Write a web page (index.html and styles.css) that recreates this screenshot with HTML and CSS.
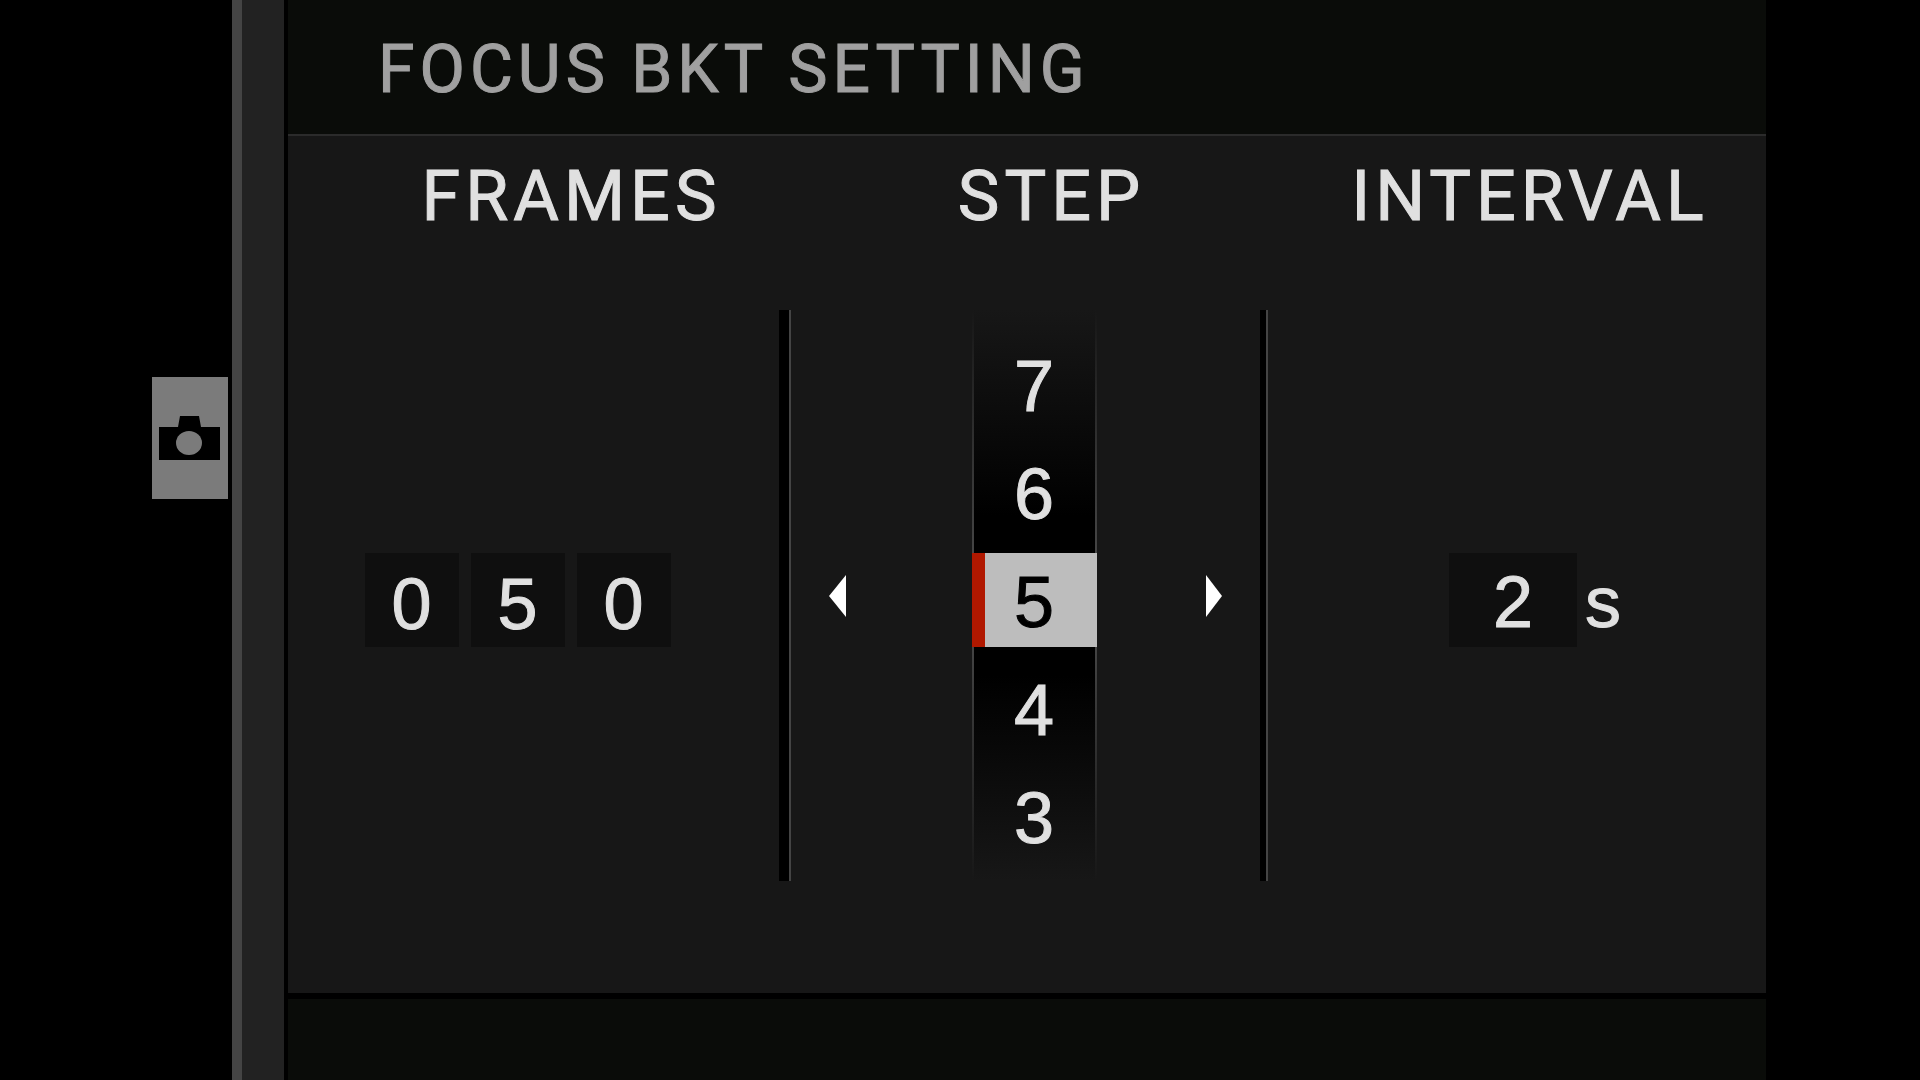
FILE: index.html
```html
<!DOCTYPE html>
<html lang="en">
<head>
  <meta charset="utf-8">
  <meta name="viewport" content="width=device-width, initial-scale=1">
  <title>Focus BKT Setting</title>
  <link rel="stylesheet" href="styles.css">
</head>
<body>
  <div class="screen">
    <nav class="tabs" aria-label="Menu tabs">
      <button class="tab" type="button" aria-label="Shooting setting">
        <svg class="tab-icon" viewBox="0 0 62 46" aria-hidden="true">
          <path d="M0 12H19L21 1H40L42 12H61V45H0Z" fill="#000"/>
          <ellipse cx="30" cy="28" rx="13" ry="12" fill="#7b7b7b"/>
        </svg>
      </button>
    </nav>
    <div class="rail"></div>
    <main class="panel">
      <header class="panel-header">
        <h1 class="title">FOCUS BKT SETTING</h1>
      </header>
      <div class="settings">
        <h2 class="heading heading-frames" id="frames">FRAMES</h2>
        <h2 class="heading heading-step" id="step">STEP</h2>
        <h2 class="heading heading-interval" id="interval">INTERVAL</h2>

        <div class="control control-frames" role="group" aria-labelledby="frames">
          <input class="value" type="text" inputmode="numeric" maxlength="1" value="0" aria-label="Frames, hundreds">
          <input class="value" type="text" inputmode="numeric" maxlength="1" value="5" aria-label="Frames, tens">
          <input class="value" type="text" inputmode="numeric" maxlength="1" value="0" aria-label="Frames, units">
        </div>
        <div class="divider divider-left"></div>
        <div class="control control-step" role="group" aria-labelledby="step">
          <button class="arrow" type="button" aria-label="Previous setting">
            <svg class="arrow-icon" viewBox="0 0 18 42" aria-hidden="true"><path d="M17 0V42L0 21Z" fill="#fff"/></svg>
          </button>
          <div class="reel" role="listbox" aria-labelledby="step">
            <button class="step" type="button" role="option" aria-selected="false">7</button>
            <button class="step" type="button" role="option" aria-selected="false">6</button>
            <button class="step step-selected" type="button" role="option" aria-selected="true">5</button>
            <button class="step" type="button" role="option" aria-selected="false">4</button>
            <button class="step" type="button" role="option" aria-selected="false">3</button>
          </div>
          <button class="arrow" type="button" aria-label="Next setting">
            <svg class="arrow-icon" viewBox="0 0 18 42" aria-hidden="true"><path d="M1 0V42L17 21Z" fill="#fff"/></svg>
          </button>
        </div>
        <div class="divider divider-right"></div>
        <div class="control control-interval">
          <input class="value value-wide" id="seconds" type="text" inputmode="numeric" value="2" aria-labelledby="interval">
          <label class="unit" for="seconds">s</label>
        </div>
      </div>
      <footer class="panel-footer"></footer>
    </main>
  </div>
</body>
</html>
```
FILE: styles.css
```css
* {
  box-sizing: border-box;
}

body {
  margin: 0;
  background: #000;
  color: #e0e0e0;
  font-family: "Liberation Sans", Arial, sans-serif;
  -webkit-text-stroke: 1px currentColor;
}

button,
input {
  margin: 0;
  padding: 0;
  border: 0;
  background: none;
  color: inherit;
  font: inherit;
}

.screen {
  display: grid;
  grid-template-columns: 232fr 56px 1478fr 154fr;
  min-height: 100vh;
}

/* Menu tabs */
.tabs {
  display: flex;
  justify-content: flex-end;
  align-items: flex-start;
  padding: 377px 4px 0 0;
}

.tab {
  display: flex;
  align-items: center;
  justify-content: center;
  width: 76px;
  height: 122px;
  background: #7b7b7b;
}

.tab-icon {
  width: 62px;
  height: 46px;
}

.rail {
  background: #222;
  border-left: 10px solid #444;
  border-right: 4px solid #000;
}

/* Panel */
.panel {
  display: flex;
  flex-direction: column;
  background: #171717;
}

.panel-header {
  height: 136px;
  padding: 30px 90px 0;
  background: #0a0c09;
  border-bottom: 2px solid #2b2b2b;
}

.title,
.heading {
  margin: 0;
  font-family: Roboto, sans-serif;
  font-weight: 400;
  line-height: 80px;
  letter-spacing: 5px;
  white-space: nowrap;
}

.title {
  color: #a0a0a0;
  font-size: 66px;
}

.panel-footer {
  height: 87px;
  background: #0a0c09;
  border-top: 6px solid #000;
}

.settings {
  display: grid;
  flex: 1;
  grid-template-columns: 491fr 12px 469fr 8px 498fr;
  grid-template-rows: 174px 571px;
}

.heading {
  grid-row: 1;
  padding-top: 20px;
  font-size: 70px;
  text-align: center;
}

.heading-frames {
  grid-column: 1;
  padding-left: 76px;
}

.heading-step {
  grid-column: 3;
  padding-left: 52px;
}

.heading-interval {
  grid-column: 5;
  padding-left: 26px;
}

.divider {
  grid-row: 2;
  background: #000;
  border-right: 2px solid #444;
}

.divider-left {
  grid-column: 2;
}

.divider-right {
  grid-column: 4;
}

/* Controls */
.control {
  display: flex;
  grid-row: 2;
  align-items: center;
  justify-content: center;
  font-size: 72px;
  line-height: 94px;
}

.control-frames {
  grid-column: 1;
  gap: 12px;
  padding: 9px 32px 0 0;
}

.control-step {
  grid-column: 3;
}

.control-interval {
  grid-column: 5;
  gap: 8px;
  padding: 9px 0 0 36px;
}

.value {
  width: 94px;
  height: 94px;
  padding-top: 8px;
  background: #0f0f0f;
  text-align: center;
}

.value-wide {
  width: 128px;
  padding-top: 4px;
}

.unit {
  padding-top: 4px;
}

.arrow {
  width: 18px;
  height: 42px;
}

.arrow-icon {
  display: block;
  width: 18px;
  height: 42px;
}

.reel {
  display: flex;
  flex-direction: column;
  align-self: stretch;
  gap: 14px;
  width: 125px;
  margin: 0 108px 0 125px;
  padding: 27px 0 18px;
  background:
    linear-gradient(#171717, #484848 45%, #484848 55%, #171717) left / 2px 100% no-repeat,
    linear-gradient(#171717, #484848 45%, #484848 55%, #171717) right / 2px 100% no-repeat,
    linear-gradient(#171717, #000 36%, #000 64%, #171717);
}

.step {
  height: 94px;
  padding-top: 4px;
  line-height: 90px;
  text-align: center;
}

.step-selected {
  padding-right: 13px;
  background: #bdbdbd;
  border-left: 13px solid #b01800;
  color: #000;
}
```
